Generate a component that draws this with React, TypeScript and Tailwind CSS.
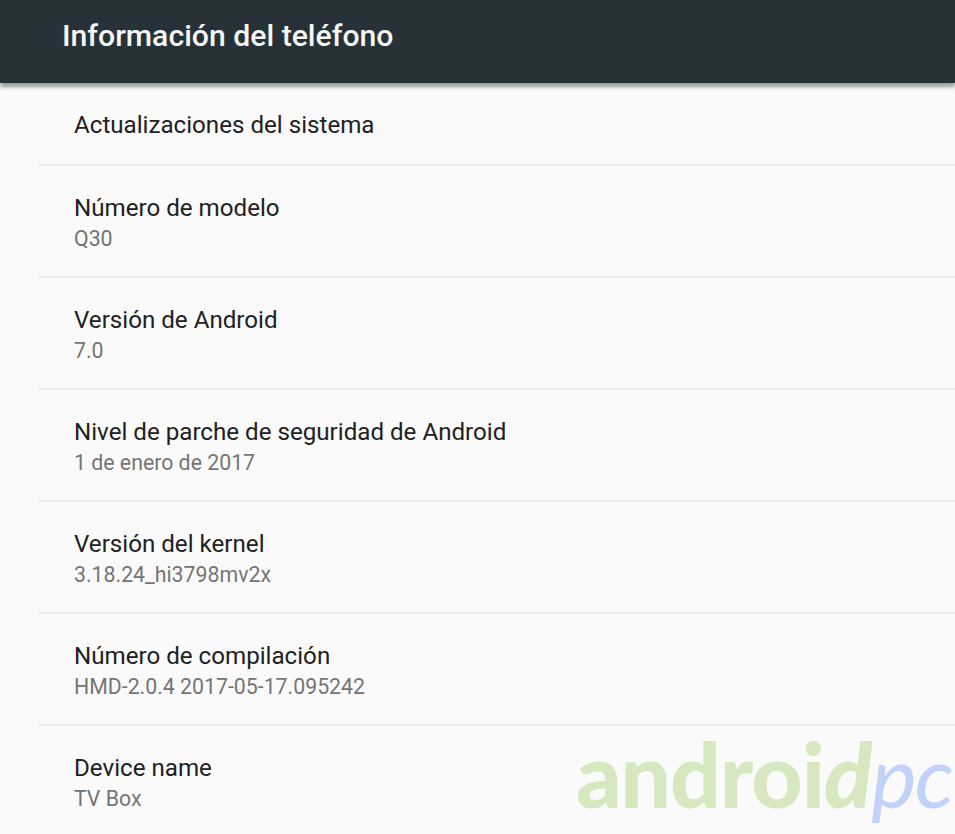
const items = [
  { title: "Número de modelo", value: "Q30" },
  { title: "Versión de Android", value: "7.0" },
  { title: "Nivel de parche de seguridad de Android", value: "1 de enero de 2017" },
  { title: "Versión del kernel", value: "3.18.24_hi3798mv2x" },
  { title: "Número de compilación", value: "HMD-2.0.4 2017-05-17.095242" },
  { title: "Device name", value: "TV Box" },
];

export default function App() {
  return (
    <div className="relative h-[834px] w-[955px] overflow-hidden bg-[#fafafa] font-['Roboto',sans-serif]">
      {/* Toolbar */}
      <header className="relative z-10 flex h-[83px] items-start bg-[#263238] pl-[62px] pt-[16px] shadow-[0_4px_4px_rgba(0,0,0,0.38)]">
        <h1 className="text-[30.2px] leading-[40px] font-medium text-[#f5f6f6]">Información del teléfono</h1>
      </header>

      {/* Settings list */}
      <div className="pl-[38px]">
        <div className="h-[83px] border-b-2 border-[#ececec] pl-[36px] pt-[26px]">
          <p className="text-[24.15px] leading-[32px] text-[#212121]">Actualizaciones del sistema</p>
        </div>
        {items.map((item) => (
          <div key={item.title} className="h-[112px] border-b-2 border-[#ececec] pl-[36px] pt-[26px]">
            <p className="text-[24.15px] leading-[32px] text-[#212121]">{item.title}</p>
            <p className="text-[21.3px] leading-[30px] text-[#757575]">{item.value}</p>
          </div>
        ))}
      </div>

      {/* Watermark */}
      <div className="absolute left-[576px] top-[714px] flex items-baseline whitespace-nowrap font-['Lato',sans-serif] text-[89px] leading-[120px]">
        <span className="font-black tracking-[-1px] text-[#d7e8c0]">
          androi<span className="italic">d</span>
        </span>
        <span className="text-[86px] font-normal italic tracking-[-2px] text-[#c2d2fb]">pc</span>
      </div>
    </div>
  );
}
